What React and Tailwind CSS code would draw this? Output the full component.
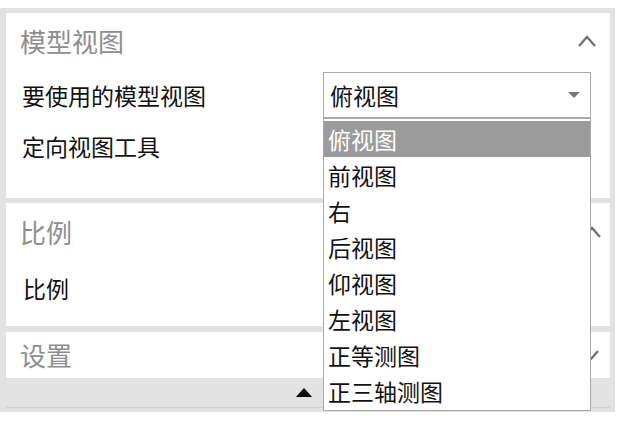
import React from "react";

const items = ["俯视图", "前视图", "右", "后视图", "仰视图", "左视图", "正等测图", "正三轴测图"];

const ChevronUp = () => (
  <svg width="20" height="14" viewBox="0 0 20 14" fill="none">
    <path d="M2 12 L10 3 L18 12" stroke="#6f6f6f" strokeWidth="2.2" />
  </svg>
);

const ChevronDown = () => (
  <svg width="20" height="14" viewBox="0 0 20 14" fill="none">
    <path d="M2 3 L10 12 L18 3" stroke="#6f6f6f" strokeWidth="2.2" />
  </svg>
);

const App = () => {
  return (
    <div
      className="w-[630px] h-[424px] bg-white pt-[8px] overflow-hidden"
      style={{ fontFamily: '"Noto Sans CJK SC", "Noto Sans", sans-serif' }}
    >
      <div className="w-[615px] h-[404px] bg-[#e2e2e2] pl-[6px] pr-[5px] pt-[5px] flex flex-col">
        {/* 模型视图 */}
        <div className="h-[185px] bg-white flex flex-col">
          <div className="h-[55px] flex items-center justify-between pl-[14px] pr-[13px]">
            <span className="text-[26px] text-[#8e8e8e] leading-none">模型视图</span>
            <ChevronUp />
          </div>
          <div className="h-[46px] mt-[4px] flex items-center justify-between pl-[16px] pr-[19px]">
            <span className="text-[23px] text-[#111] leading-none">要使用的模型视图</span>
            <div className="relative w-[268px] h-[46px] border border-[#a9a9a9] flex items-center justify-between pl-[6px] pr-[10px]">
              <span className="text-[23px] text-[#111] leading-none">俯视图</span>
              <span className="w-0 h-0 border-l-[6px] border-r-[6px] border-t-[6px] border-l-transparent border-r-transparent border-t-[#777]"></span>
              <div className="absolute left-[-1px] right-[-1px] top-[45px] h-[293px] bg-white border border-[#a9a9a9] pt-[2px] z-10 flex flex-col">
                {items.map((it, i) => (
                  <div
                    key={it}
                    className={
                      i === 0
                        ? "h-[36px] shrink-0 flex items-center pl-[4px] bg-[#9b9b9b] text-white text-[23px] leading-none"
                        : "h-[36px] shrink-0 flex items-center pl-[4px] text-[#111] text-[23px] leading-none"
                    }
                  >
                    {it}
                  </div>
                ))}
              </div>
            </div>
          </div>
          <div className="h-[56px] flex items-center pl-[16px]">
            <span className="text-[23px] text-[#111] leading-none">定向视图工具</span>
          </div>
        </div>

        {/* 比例 */}
        <div className="h-[123px] mt-[5px] bg-white flex flex-col">
          <div className="h-[58px] flex items-center justify-between pl-[14px] pr-[8px]">
            <span className="text-[26px] text-[#8e8e8e] leading-none">比例</span>
            <ChevronUp />
          </div>
          <div className="h-[54px] flex items-center pl-[17px]">
            <span className="text-[23px] text-[#111] leading-none">比例</span>
          </div>
        </div>

        {/* 设置 */}
        <div className="h-[46px] mt-[6px] bg-white flex items-center justify-between pl-[14px] pr-[10px]">
          <span className="text-[26px] text-[#8e8e8e] leading-none">设置</span>
          <ChevronDown />
        </div>

        <div className="h-[30px] border-b border-[#d0d0d0] flex items-center justify-center pr-[8px]">
          <span className="w-0 h-0 border-l-[8px] border-r-[8px] border-b-[9px] border-l-transparent border-r-transparent border-b-black"></span>
        </div>
      </div>
    </div>
  );
};

export default App;
